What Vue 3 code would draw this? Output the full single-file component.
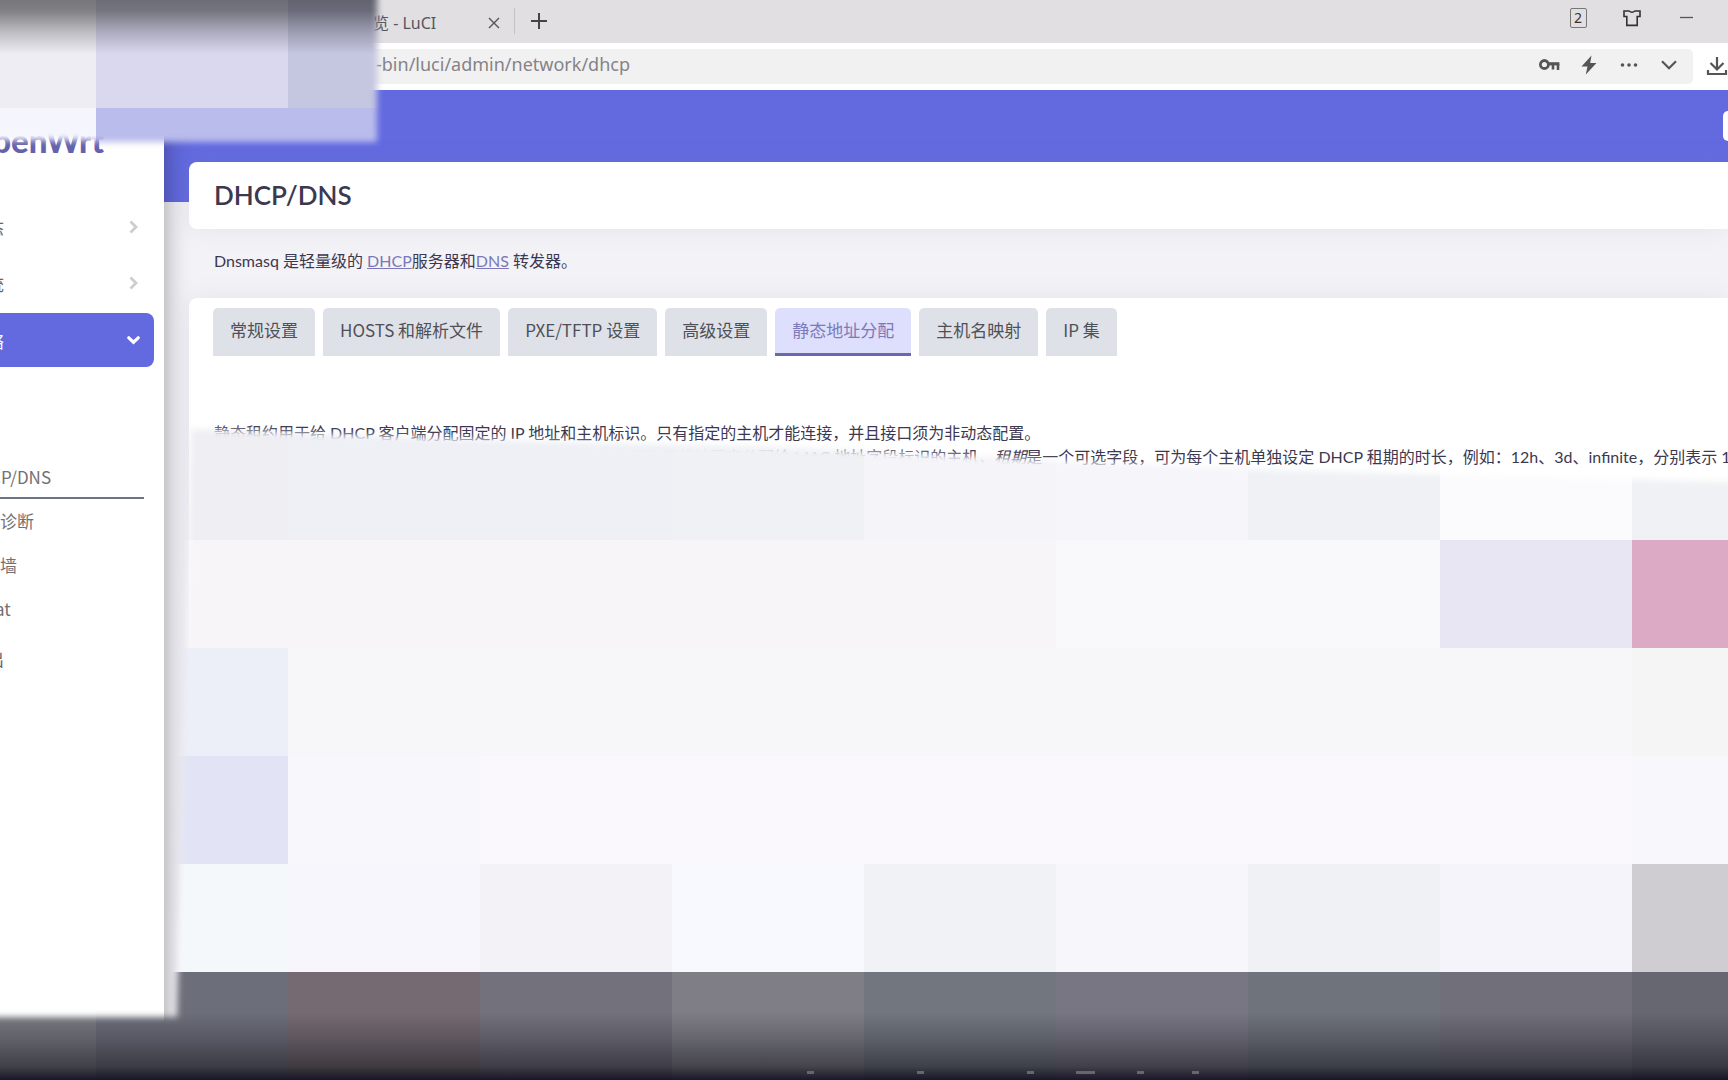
<script setup>
const tabs = ['常规设置', 'HOSTS 和解析文件', 'PXE/TFTP 设置', '高级设置', '静态地址分配', '主机名映射', 'IP 集']
const activeTab = '静态地址分配'

const subItems = ['DHCP/DNS', '网络诊断', '防火墙', 'Socat']

// Pixelated privacy cover: each row lists the tile colours from left to right.
const tileW = 192
const tileH = 108
const rows = [
  { y: 0, colors: ['#eeedf4', '#d9d8ee', '#c5c6e0'] },
  { y: 108, colors: ['#f5f5fe', '#babceb', '#babceb'] },
  { y: 432, colors: ['#efeef3', '#efeef3', '#eef0f5', '#eef0f5', '#f0f1f5', '#f4f4f9', '#f5f5fa', '#eff1f5', '#fbfbfd', '#f0f1f4'], from: 400 },
  { y: 540, colors: ['#f7f5f8', '#f7f5f8', '#f7f5f8', '#f7f5f8', '#f7f5f8', '#f7f5f8', '#f9f8fb', '#f9f8fb', '#e9e6f3', '#dcaac5'] },
  { y: 648, colors: ['#eceef8', '#eceef8', '#f7f6f8', '#f7f6f8', '#f7f6f8', '#f7f6f8', '#f7f6f8', '#f7f6f8', '#f7f6f8', '#f5f5f6'] },
  { y: 756, colors: ['#e2e4f5', '#e2e4f5', '#f8f7fc', '#faf8fd', '#faf8fd', '#faf8fd', '#faf8fd', '#faf8fd', '#faf8fd', '#f8f7fc'] },
  { y: 864, colors: ['#f5f8fb', '#f5f8fb', '#f6f6fc', '#f3f3f7', '#f7f9fe', '#f0f2f6', '#f6f6fb', '#eff1f5', '#f4f4fa', '#cfcdd1'] },
  { y: 972, colors: ['#787a80', '#6c6e79', '#756a71', '#73717c', '#7f7e86', '#72777f', '#787682', '#6f737b', '#71707a', '#676771'] }
]

const makeTiles = (list) =>
  list.flatMap((row) =>
    row.colors.map((fill, i) => {
      const y = row.from ?? row.y
      return { x: i * tileW - 96, y, h: row.y + tileH - y, fill }
    })
  )
const topTiles = makeTiles(rows.slice(0, 2))
const bottomTiles = makeTiles(rows.slice(2))

const captionTips = [
  { x: 807, w: 7 },
  { x: 917, w: 7 },
  { x: 1027, w: 7 },
  { x: 1076, w: 19 },
  { x: 1137, w: 7 },
  { x: 1192, w: 7 }
]
</script>

<template>
  <div class="screen">
    <header class="browser">
      <div class="tabbar">
        <span class="tab-title">览 - LuCI</span>
        <button class="tab-close" aria-label="关闭标签页">
          <svg width="12" height="12" viewBox="0 0 12 12"><path d="M1 1L11 11M11 1L1 11" stroke="#555" stroke-width="1.4" /></svg>
        </button>
        <span class="divider"></span>
        <button class="tab-new" aria-label="新建标签页">
          <svg width="16" height="16" viewBox="0 0 16 16"><path d="M8 0V16M0 8H16" stroke="#444" stroke-width="2" /></svg>
        </button>
        <div class="window-tools">
          <button aria-label="标签页数量"><span class="count">2</span></button>
          <button aria-label="皮肤">
            <svg width="18" height="18" viewBox="0 0 18 18" fill="none" stroke="#333" stroke-width="1.6">
              <path d="M1 2H6Q9 4.5 12 2H17V7.5H14.2V16.4H3.8V7.5H1Z" />
            </svg>
          </button>
          <button aria-label="最小化">
            <svg width="13" height="13" viewBox="0 0 13 13"><path d="M0 6.5H13" stroke="#555" stroke-width="1.3" /></svg>
          </button>
        </div>
      </div>
      <div class="addressbar">
        <div class="field">
          <input type="text" aria-label="地址" value="-bin/luci/admin/network/dhcp" />
          <button aria-label="密码">
            <svg width="21" height="14" viewBox="0 0 21 14" fill="none" stroke="#555">
              <circle cx="5.4" cy="6.5" r="4" stroke-width="2.8" />
              <path d="M9 5.8H20.4" stroke-width="3.2" />
              <path d="M14 6V11.4M19 6V12" stroke-width="2.6" />
            </svg>
          </button>
          <button aria-label="极速模式">
            <svg width="16" height="20" viewBox="0 0 16 20"><path d="M10.5 0.5L0.5 11.5H6.5L4.8 19.5L15.5 8H9.2Z" fill="#555" /></svg>
          </button>
          <button aria-label="更多">
            <svg width="18" height="6" viewBox="0 0 18 6" fill="#555"><circle cx="2.5" cy="3" r="1.8" /><circle cx="9" cy="3" r="1.8" /><circle cx="15.5" cy="3" r="1.8" /></svg>
          </button>
          <button aria-label="展开">
            <svg width="16" height="10" viewBox="0 0 16 10"><path d="M1 1.2L8 8.2L15 1.2" fill="none" stroke="#555" stroke-width="2.2" /></svg>
          </button>
        </div>
        <button class="download" aria-label="下载">
          <svg width="22" height="20" viewBox="0 0 22 20" fill="none" stroke="#555" stroke-width="2.2">
            <path d="M11 1V13M4.5 7L11 13.5L17.5 7M2 14V18H20V14" />
          </svg>
        </button>
      </div>
    </header>

    <div class="app">
      <aside class="sidebar">
        <div class="inner">
          <a class="brand" href="#">OpenWrt</a>
          <nav>
            <a class="item" href="#">状态
              <svg width="9" height="14" viewBox="0 0 9 14"><path d="M1.5 1.5L7 7L1.5 12.5" fill="none" stroke="#cdcdd0" stroke-width="2.8" /></svg>
            </a>
            <a class="item" href="#">系统
              <svg width="9" height="14" viewBox="0 0 9 14"><path d="M1.5 1.5L7 7L1.5 12.5" fill="none" stroke="#cdcdd0" stroke-width="2.8" /></svg>
            </a>
            <a class="item active" href="#">网络
              <svg width="13" height="9" viewBox="0 0 13 9"><path d="M1.8 1.8L6.5 6.2L11.2 1.8" fill="none" stroke="#fff" stroke-width="3.2" stroke-linecap="round" /></svg>
            </a>
            <ul class="submenu">
              <li v-for="(item, i) in subItems" :key="item"><a href="#" :class="{ current: i === 0 }">{{ item }}</a></li>
            </ul>
            <a class="item" href="#">退出</a>
          </nav>
        </div>
      </aside>

      <main class="main">
        <div class="banner"><button class="refresh" aria-label="刷新"></button></div>
        <section class="card title-card"><h2>DHCP/DNS</h2></section>
        <p class="intro">Dnsmasq 是轻量级的 <a href="#">DHCP</a>服务器和<a href="#">DNS</a> 转发器。</p>
        <section class="card">
          <div class="tabs" role="tablist">
            <button v-for="tab in tabs" :key="tab" role="tab" :aria-selected="tab === activeTab" :class="{ selected: tab === activeTab }">{{ tab }}</button>
          </div>
          <p class="notes">
            静态租约用于给 DHCP 客户端分配固定的 IP 地址和主机标识。只有指定的主机才能连接，并且接口须为非动态配置。<br />
            使用 <em>添加</em> 按钮来增加新的租约条目。IPv4 地址和主机名 字段的值将被固定分配给 MAC 地址字段标识的主机，<em>租期</em>是一个可选字段，可为每个主机单独设定 DHCP 租期的时长，例如：12h、3d、infinite，分别表示 12 小时
          </p>
        </section>
      </main>
    </div>

    <svg class="cover" viewBox="0 0 1728 1080" preserveAspectRatio="none" aria-hidden="true">
      <defs>
        <filter id="soft" x="-5%" y="-5%" width="110%" height="110%"><feGaussianBlur stdDeviation="3" /></filter>
        <mask id="top-mask" maskUnits="userSpaceOnUse" x="0" y="0" width="1728" height="1080">
          <path d="M-40 -40H377V142H96L90 140H-40Z" fill="#fff" filter="url(#soft)" />
        </mask>
        <mask id="bottom-mask" maskUnits="userSpaceOnUse" x="0" y="0" width="1728" height="1080">
          <path d="M191 429L430 438L600 443L760 446L900 453L990 457L1050 461L1300 471L1780 483V1120H-40V1017H177L183 760Z" fill="#fff" filter="url(#soft)" />
        </mask>
        <linearGradient id="shade-top" x1="0" y1="0" x2="0" y2="1">
          <stop offset="0" stop-opacity="0.5" />
          <stop offset="0.2" stop-opacity="0.46" />
          <stop offset="0.6" stop-opacity="0.2" />
          <stop offset="1" stop-opacity="0" />
        </linearGradient>
        <linearGradient id="shade-bottom" x1="0" y1="0" x2="0" y2="1">
          <stop offset="0" stop-color="#0a0a14" stop-opacity="0" />
          <stop offset="0.4" stop-color="#0a0a14" stop-opacity="0.22" />
          <stop offset="0.8" stop-color="#0a0a10" stop-opacity="0.5" />
          <stop offset="1" stop-color="#0c0a1e" stop-opacity="0.88" />
        </linearGradient>
      </defs>
      <g mask="url(#top-mask)" shape-rendering="crispEdges">
        <rect v-for="(t, i) in topTiles" :key="i" :x="t.x" :y="t.y" :width="tileW" :height="t.h" :fill="t.fill" />
        <rect width="480" height="54" fill="url(#shade-top)" />
      </g>
      <g mask="url(#bottom-mask)" shape-rendering="crispEdges">
        <rect v-for="(t, i) in bottomTiles" :key="i" :x="t.x" :y="t.y" :width="tileW" :height="t.h" :fill="t.fill" />
        <rect y="1012" width="1728" height="68" fill="url(#shade-bottom)" />
        <rect v-for="tip in captionTips" :key="tip.x" :x="tip.x" y="1071" :width="tip.w" height="3" fill="#67666e" />
      </g>
    </svg>
  </div>
</template>

<style>
body {
  margin: 0;
  overflow: hidden;
}
</style>

<style scoped>
.screen {
  position: relative;
  display: flex;
  flex-direction: column;
  min-height: 100vh;
  overflow: hidden;
  font-family: Lato, "Noto Sans CJK SC", sans-serif;
  font-size: 16px;
  color: #3c3850;
  background: #f3f2f7;
}
button {
  display: flex;
  align-items: center;
  justify-content: center;
  padding: 0;
  border: 0;
  background: none;
  font: inherit;
}
a {
  color: inherit;
  text-decoration: none;
}
.browser {
  font-family: "Noto Sans", "Noto Sans CJK SC", sans-serif;
}
.tabbar {
  display: flex;
  align-items: center;
  box-sizing: border-box;
  height: 43px;
  padding: 0 0 2px 373px;
  background: #e1dfe2;
}
.tab-title {
  width: 109px;
  padding-top: 4px;
  font-size: 16px;
  line-height: 24px;
  color: #55555d;
}
.tab-close {
  width: 24px;
  height: 24px;
  padding-top: 4px;
}
.divider {
  width: 1px;
  height: 26px;
  margin: 0 12px 0 8px;
  background: #c4c2c5;
}
.tab-new {
  width: 24px;
  height: 24px;
}
.window-tools {
  display: flex;
  margin: 0 15px 6px auto;
}
.window-tools button {
  width: 54px;
}
.count {
  width: 15px;
  border: 1px solid #777;
  border-radius: 2px;
  font-size: 14px;
  line-height: 18px;
  color: #333;
}
.addressbar {
  display: flex;
  align-items: center;
  height: 47px;
  background: #fff;
}
.field {
  display: flex;
  flex: 1;
  box-sizing: border-box;
  height: 35px;
  padding: 0 4px 3px 0;
  border-radius: 5px;
  background: #f1f1f1;
}
.field input {
  flex: 1;
  min-width: 0;
  padding: 0 0 2px 376px;
  border: 0;
  outline: 0;
  background: none;
  font: inherit;
  font-size: 18px;
  color: #858388;
}
.field button {
  width: 40px;
}
.download {
  width: 24px;
  margin-left: 12px;
  margin-right: -1px;
  padding-bottom: 2px;
}
.app {
  display: flex;
  flex: 1;
}
.sidebar {
  position: relative;
  z-index: 1;
  width: 164px;
  background: #fff;
  box-shadow: 0 0 24px rgba(0, 0, 0, 0.36);
}
.inner {
  height: 100%;
  overflow: hidden;
}
.brand {
  display: flex;
  justify-content: flex-end;
  margin: 30px 60px 40px -40px;
  font-size: 33px;
  font-weight: 900;
  line-height: 40px;
  color: #6462ae;
}
nav {
  margin-left: -34px;
}
.item {
  display: flex;
  align-items: center;
  justify-content: space-between;
  height: 54px;
  margin: 0 10px 2px 0;
  padding: 0 16px 0 4px;
  border-radius: 8px;
  font-size: 17px;
  color: #6b6569;
}
.item.active {
  padding-right: 14px;
  margin-top: 3px;
  background: #636ae0;
  color: #fff;
}
.submenu {
  margin: 0 20px 0 0;
  padding: 86px 0 0;
  list-style: none;
  font-family: "Noto Sans CJK SC", sans-serif;
}
.submenu a {
  display: block;
  padding-top: 2px;
  border-bottom: 2px solid transparent;
  font-size: 17px;
  line-height: 40px;
  color: #756f73;
}
.submenu .current {
  border-color: #6b7483;
}
.main {
  flex: 1;
  min-width: 0;
}
.banner {
  display: flex;
  justify-content: flex-end;
  align-items: flex-start;
  height: 112px;
  background: #636ae0;
}
.refresh {
  width: 60px;
  height: 30px;
  margin: 21px -55px 0 0;
  border-radius: 5px;
  background: #fff;
}
.card {
  margin-left: 25px;
  border-radius: 8px 0 0 8px;
  background: #fff;
  box-shadow: 0 0 24px rgba(120, 130, 140, 0.12);
}
.title-card {
  margin-top: -40px;
  padding: 0 25px;
}
h2 {
  margin: 0;
  font-size: 26px;
  font-weight: 600;
  line-height: 67px;
}
.intro {
  margin: 20px 50px 25px;
  line-height: 24px;
}
.intro a {
  color: #7a78b8;
  text-decoration: underline;
}
.tabs {
  display: flex;
  gap: 8px;
  padding: 10px 24px 0;
  font-family: "Noto Sans CJK SC", sans-serif;
}
.tabs button {
  height: 48px;
  padding: 0 17px 5px;
  border-radius: 5px 5px 0 0;
  background: #dee2e8;
  font-size: 17px;
  color: #505057;
}
.tabs .selected {
  border-bottom: 3px solid #6b68ae;
  padding-bottom: 2px;
  background: #dedffc;
  color: #7c7aba;
}
.notes {
  margin: 0;
  padding: 65px 0 0 25px;
  height: 500px;
  overflow: hidden;
  line-height: 24px;
  white-space: nowrap;
}
.cover {
  position: absolute;
  inset: 0;
  z-index: 2;
  width: 100%;
  height: 100%;
  pointer-events: none;
}
</style>
